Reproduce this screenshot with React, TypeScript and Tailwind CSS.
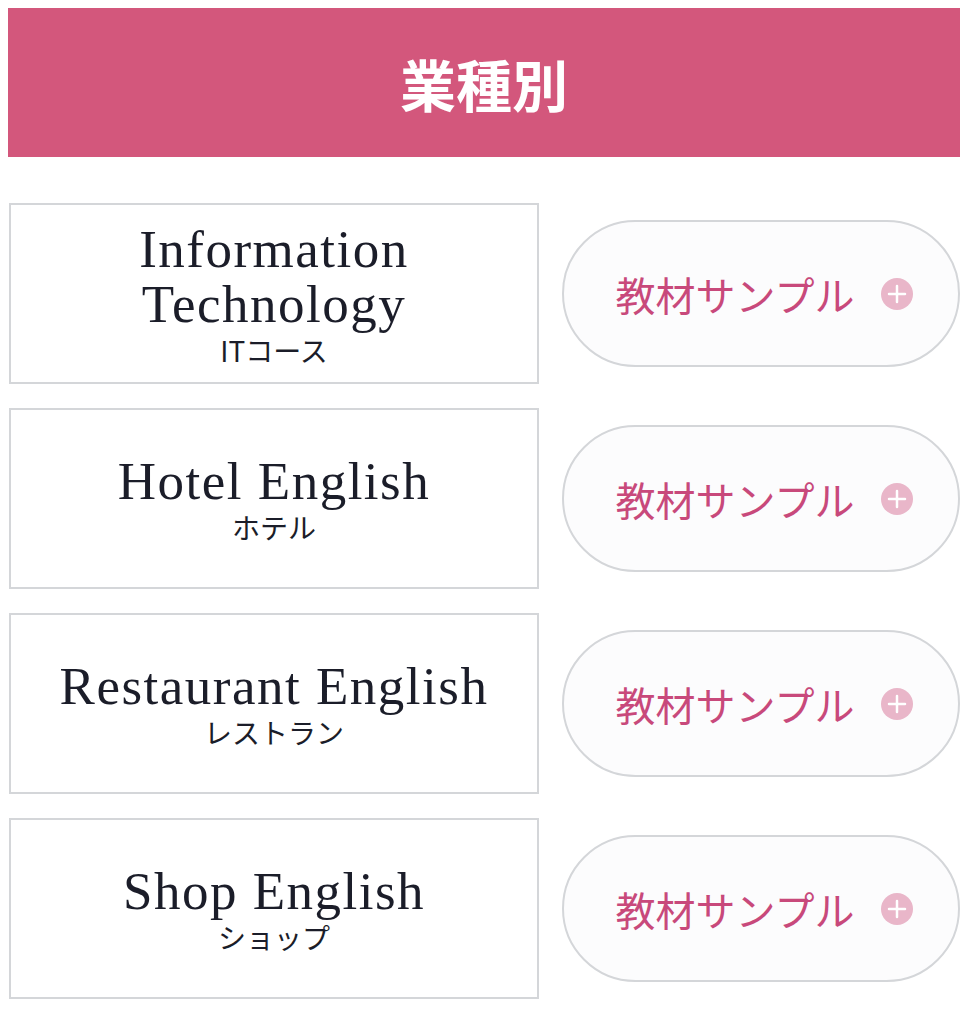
const courses = [
  { title: ["Information", "Technology"], sub: "ITコース" },
  { title: ["Hotel English"], sub: "ホテル" },
  { title: ["Restaurant English"], sub: "レストラン" },
  { title: ["Shop English"], sub: "ショップ" },
];

const serif = { fontFamily: '"Liberation Serif", "Noto Sans CJK JP", serif' };

const PlusIcon = () => (
  <svg width="34" height="34" viewBox="0 0 34 34" className="shrink-0">
    <circle cx="17" cy="17" r="16" fill="#e9b6c9" />
    <path d="M17 9v16M9 17h16" stroke="#fff" strokeWidth="2.5" strokeLinecap="round" />
  </svg>
);

const CourseRow = ({ title, sub }: { title: string[]; sub: string }) => (
  <div className="flex items-center gap-[23px]">
    <div className="w-[530px] h-[181px] border-2 border-[#d4d6d9] bg-white flex flex-col items-center justify-center">
      <div className="text-[53px] leading-[55px] tracking-[1.5px] text-[#1b1d29] text-center" style={serif}>
        {title.map((t) => (
          <div key={t}>{t}</div>
        ))}
      </div>
      <div className="mt-[2px] text-[28px] leading-[32px] text-[#1b1d29] font-['Noto_Sans_CJK_JP',sans-serif]">
        {sub}
      </div>
    </div>
    <button className="w-[398px] h-[147px] rounded-full border-2 border-[#d4d6d9] bg-[#fcfcfd] flex items-center justify-center gap-[26px] pl-[8px]">
      <span className="text-[40px] text-[#c8497b] font-['Noto_Sans_CJK_JP',sans-serif]">
        教材サンプル
      </span>
      <PlusIcon />
    </button>
  </div>
);

export default function App() {
  return (
    <div className="w-[968px] min-h-[1024px] bg-white pt-[8px] px-[8px]">
      <div className="h-[149px] bg-[#d3577c] flex items-center justify-center">
        <h1 className="text-[56px] font-bold text-white font-['Noto_Sans_CJK_JP',sans-serif]">業種別</h1>
      </div>
      <div className="flex flex-col gap-[24px] mt-[46px] pl-[1px]">
        {courses.map((c) => (
          <CourseRow key={c.sub} title={c.title} sub={c.sub} />
        ))}
      </div>
    </div>
  );
}
